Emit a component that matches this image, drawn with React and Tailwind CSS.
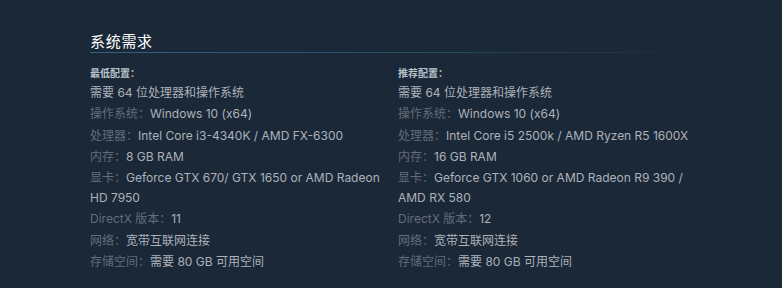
const minimum = [
  { label: '操作系统：', value: 'Windows 10 (x64)' },
  { label: '处理器：', value: 'Intel Core i3-4340K / AMD FX-6300' },
  { label: '内存：', value: '8 GB RAM' },
  { label: '显卡：', value: 'Geforce GTX 670/ GTX 1650 or AMD Radeon HD 7950' },
  { label: 'DirectX 版本：', value: '11' },
  { label: '网络：', value: '宽带互联网连接' },
  { label: '存储空间：', value: '需要 80 GB 可用空间' },
];

const recommended = [
  { label: '操作系统：', value: 'Windows 10 (x64)' },
  { label: '处理器：', value: 'Intel Core i5 2500k / AMD Ryzen R5 1600X' },
  { label: '内存：', value: '16 GB RAM' },
  { label: '显卡：', value: 'Geforce GTX 1060 or AMD Radeon R9 390 / AMD RX 580' },
  { label: 'DirectX 版本：', value: '12' },
  { label: '网络：', value: '宽带互联网连接' },
  { label: '存储空间：', value: '需要 80 GB 可用空间' },
];

function ReqColumn({ title, rows }) {
  return (
    <div className="w-[296px]">
      <p className="mb-[3px] text-[10px] font-bold leading-[14px] text-[#b9c3cc]">{title}</p>
      <ul className="text-[12px] leading-[20px] text-[#acb2b8]">
        <li className="mb-[1.3px]">需要 64 位处理器和操作系统</li>
        {rows.map((r) => (
          <li key={r.label} className="mb-[1.3px]">
            <span className="text-[#626d78]">{r.label}</span>{r.value}
          </li>
        ))}
      </ul>
    </div>
  );
}

export default function App() {
  return (
    <div
      className="h-[288px] w-[782px] bg-[#1b2838] pl-[90px] pt-[32px]"
      style={{ fontFamily: 'Inter, "Noto Sans CJK SC", sans-serif' }}
    >
      <div className="w-[616px]">
        <h2 className="text-[15px] leading-[20px] tracking-[0.7px] text-white">系统需求</h2>
        <div className="h-px w-full bg-gradient-to-r from-[#2f6480] via-[#2a4f66] to-transparent" />
        <div className="mt-[13px] flex gap-[12px]">
          <ReqColumn title="最低配置：" rows={minimum} />
          <ReqColumn title="推荐配置：" rows={recommended} />
        </div>
      </div>
    </div>
  );
}
